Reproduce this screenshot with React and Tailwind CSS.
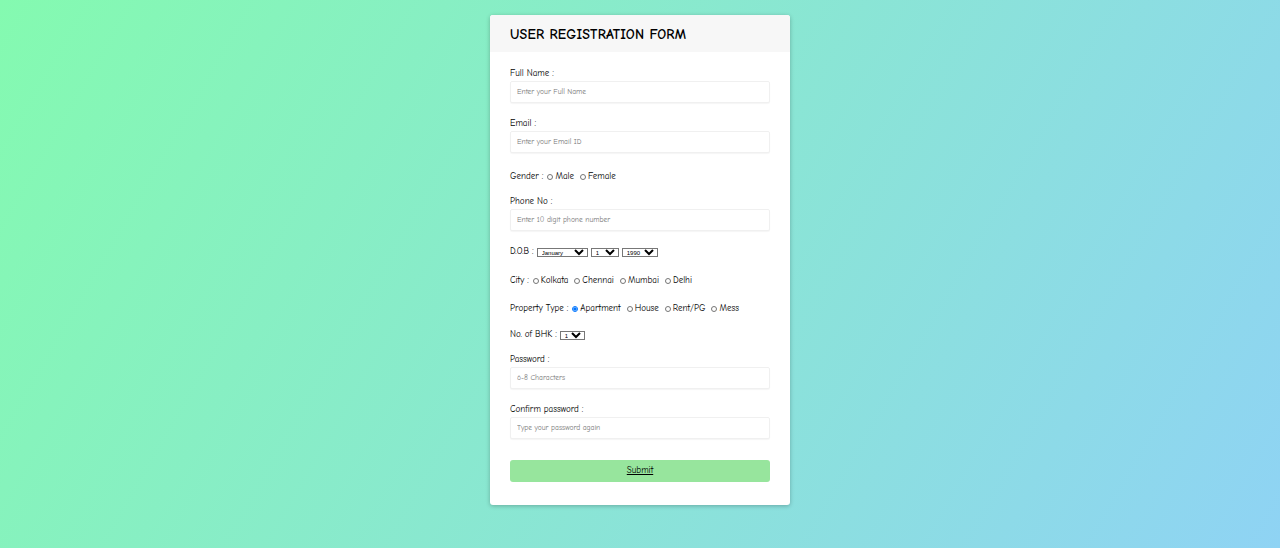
import React, { useState } from 'react';

const font = { fontFamily: '"Comic Sans MS", "Comic Neue", "DejaVu Sans", sans-serif' };

const TextField = ({ label, placeholder, type = 'text', className = '' }) => (
  <div className={`flex flex-col ${className}`}>
    <label className="h-[12px] text-[9px] leading-[12px] text-black">{label}</label>
    <input
      type={type}
      placeholder={placeholder}
      className="mt-[2px] w-full h-[22px] px-[6px] text-[7.5px] leading-[22px] bg-white border border-[#f0f0f0] rounded-[2px] shadow-[0_1px_1px_rgba(0,0,0,0.04)] outline-none placeholder:text-[#777]"
    />
  </div>
);

const Radio = ({ name, label, checked, onChange }) => (
  <label className="inline-flex items-center mr-[6px]">
    <input
      type="radio"
      name={name}
      checked={checked}
      onChange={onChange}
      className="w-[6px] h-[6px] m-0 mr-[2px]"
    />
    <span>{label}</span>
  </label>
);

// native selects use a plain sans face, not the page font
const Select = ({ options, className }) => (
  <select
    className={`h-[9px] text-[6px] leading-[6px] border border-[#777] bg-white p-0 mr-[3px] font-['Liberation_Sans',Arial,sans-serif] ${className}`}
  >
    {options.map((o) => (
      <option key={o}>{o}</option>
    ))}
  </select>
);

const months = ['January', 'February', 'March', 'April', 'May', 'June', 'July', 'August', 'September', 'October', 'November', 'December'];
const days = Array.from({ length: 31 }, (_, i) => String(i + 1));
const years = Array.from({ length: 30 }, (_, i) => String(1990 + i));

export default function App() {
  const [gender, setGender] = useState('');
  const [city, setCity] = useState('');
  const [property, setProperty] = useState('Apartment');

  return (
    <div
      className="min-h-[548px] w-full flex justify-center bg-[linear-gradient(120deg,#84fab0_0%,#8fd3f4_100%)]"
      style={font}
    >
      <div className="mt-[15px] mb-[43px] w-[300px] h-[490px] bg-white rounded-[3px] shadow-[0_1px_4px_rgba(0,0,0,0.25)] overflow-hidden">
        <div className="h-[37px] bg-[#f7f7f7] flex items-center px-[20px] pt-[1px]">
          <h1 className="text-[14px] font-bold text-black tracking-[0.2px]">USER REGISTRATION FORM</h1>
        </div>

        <form className="flex flex-col px-[20px] pt-[15px]" onSubmit={(e) => e.preventDefault()}>
          <TextField label="Full Name :" placeholder="Enter your Full Name" />
          <TextField label="Email :" placeholder="Enter your Email ID" className="mt-[14px]" />

          <div className="mt-[18px] h-[12px] flex items-center text-[9px] text-black">
            <span className="mr-[4px]">Gender :</span>
            <Radio name="gender" label="Male" checked={gender === 'Male'} onChange={() => setGender('Male')} />
            <Radio name="gender" label="Female" checked={gender === 'Female'} onChange={() => setGender('Female')} />
          </div>

          <TextField label="Phone No :" placeholder="Enter 10 digit phone number" className="mt-[12px]" />

          <div className="mt-[15px] h-[12px] flex items-center text-[9px] text-black">
            <span className="mr-[3px]">D.O.B :</span>
            <Select options={months} className="w-[51px]" />
            <Select options={days} className="w-[28px]" />
            <Select options={years} className="w-[36px]" />
          </div>

          <div className="mt-[17px] h-[12px] flex items-center text-[9px] text-black">
            <span className="mr-[4px]">City :</span>
            {['Kolkata', 'Chennai', 'Mumbai', 'Delhi'].map((c) => (
              <Radio key={c} name="city" label={c} checked={city === c} onChange={() => setCity(c)} />
            ))}
          </div>

          <div className="mt-[16px] h-[12px] flex items-center text-[9px] text-black">
            <span className="mr-[4px]">Property Type :</span>
            {['Apartment', 'House', 'Rent/PG', 'Mess'].map((p) => (
              <Radio key={p} name="property" label={p} checked={property === p} onChange={() => setProperty(p)} />
            ))}
          </div>

          <div className="mt-[14px] h-[12px] flex items-center text-[9px] text-black">
            <span className="mr-[3px]">No. of BHK :</span>
            <Select options={['1', '2', '3', '4']} className="w-[25px]" />
          </div>

          <TextField label="Password :" placeholder="6-8 Characters" type="password" className="mt-[12px]" />
          <TextField label="Confirm password :" placeholder="Type your password again" type="password" className="mt-[14px]" />

          <button
            type="submit"
            className="mt-[21px] w-full h-[22px] bg-[#97e59d] rounded-[3px] text-[9px] text-black underline"
          >
            Submit
          </button>
        </form>
      </div>
    </div>
  );
}
